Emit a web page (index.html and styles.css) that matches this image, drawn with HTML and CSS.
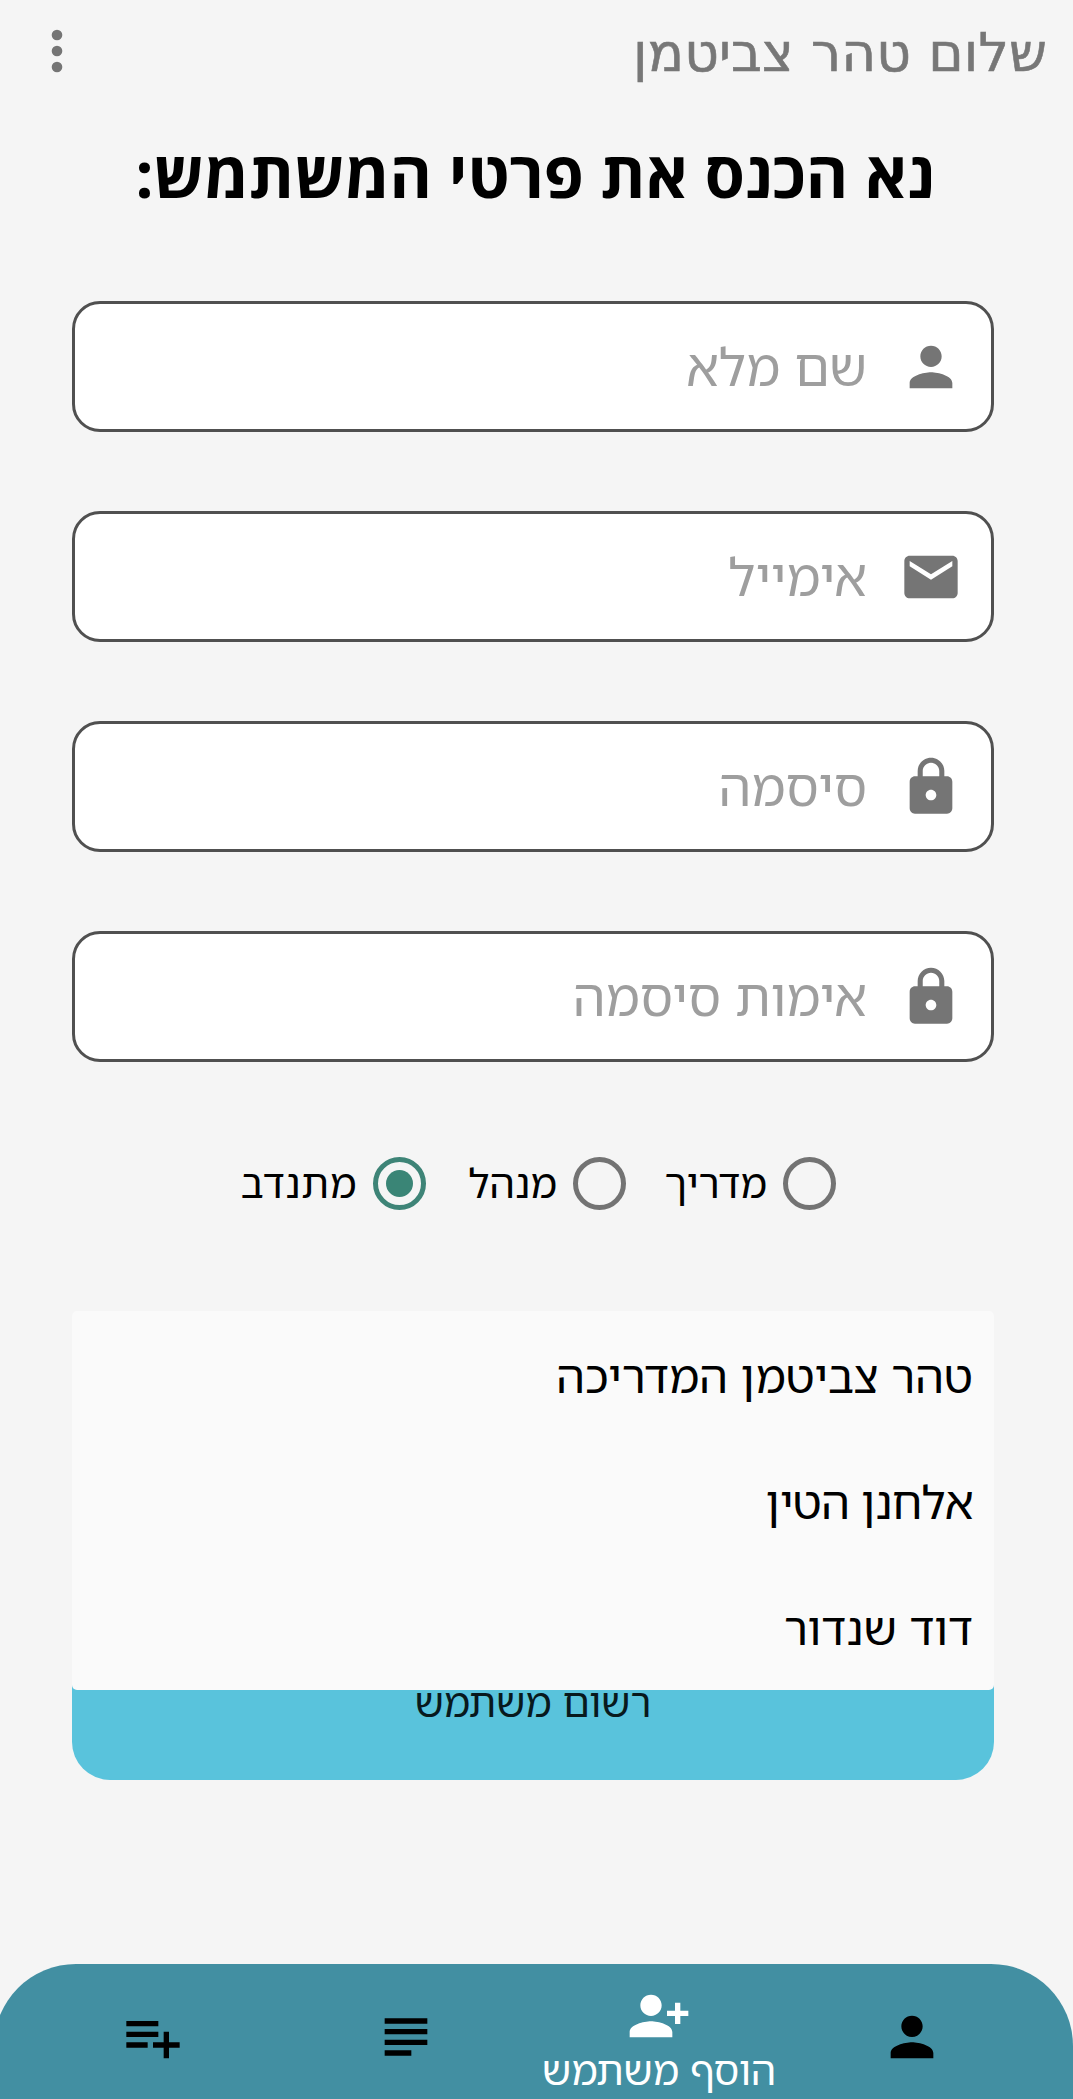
FILE: index.html
```html
<!DOCTYPE html>
<html lang="he" dir="rtl">
<head>
<meta charset="utf-8">
<title>הוסף משתמש</title>
<link rel="stylesheet" href="styles.css">
</head>
<body>
<svg class="defs" aria-hidden="true">
  <symbol id="person" viewBox="0 0 24 24"><path d="M12 12c2.21 0 4-1.79 4-4s-1.79-4-4-4-4 1.79-4 4 1.79 4 4 4zm0 2c-2.67 0-8 1.34-8 4v2h16v-2c0-2.66-5.33-4-8-4z"/></symbol>
  <symbol id="mail" viewBox="0 0 24 24"><path d="M20 4H4c-1.1 0-2 .9-2 2v12c0 1.100.9 2 2 2h16c1.100 0 2-.9 2-2V6c0-1.100-.9-2-2-2zm0 4l-8 5-8-5V6l8 5 8-5v2z"/></symbol>
  <symbol id="lock" viewBox="0 0 24 24"><path d="M18 8h-1V6c0-2.760-2.240-5-5-5S7 3.240 7 6v2H6c-1.100 0-2 .9-2 2v10c0 1.100.9 2 2 2h12c1.100 0 2-.9 2-2V10c0-1.100-.9-2-2-2zm-6 9c-1.100 0-2-.9-2-2s.9-2 2-2 2 .9 2 2-.9 2-2 2zm3.100-9H8.900V6c0-1.710 1.390-3.100 3.100-3.100s3.100 1.390 3.100 3.100v2z"/></symbol>
</svg>
<header class="topbar">
  <span class="greeting">שלום טהר צביטמן</span>
  <svg class="icon muted" viewBox="0 0 24 24"><circle cx="12" cy="6" r="2"/><circle cx="12" cy="12" r="2"/><circle cx="12" cy="18" r="2"/></svg>
</header>
<main class="form">
  <h1 class="heading">נא הכנס את פרטי המשתמש:</h1>
  <div class="fields">
    <div class="field"><svg class="icon muted"><use href="#person"/></svg><span>שם מלא</span></div>
    <div class="field"><svg class="icon muted"><use href="#mail"/></svg><span>אימייל</span></div>
    <div class="field"><svg class="icon muted"><use href="#lock"/></svg><span>סיסמה</span></div>
    <div class="field"><svg class="icon muted"><use href="#lock"/></svg><span>אימות סיסמה</span></div>
  </div>
  <div class="roles">
    <div class="role"><i class="radio"></i><span>מדריך</span></div>
    <div class="role"><i class="radio"></i><span>מנהל</span></div>
    <div class="role"><i class="radio checked"></i><span>מתנדב</span></div>
  </div>
  <div class="submit-area">
    <ul class="dropdown">
      <li>טהר צביטמן המדריכה</li>
      <li>אלחנן הטין</li>
      <li>דוד שנדור</li>
    </ul>
    <div class="submit">רשום משתמש</div>
  </div>
</main>
<nav class="nav">
  <div class="tab"><svg class="icon"><use href="#person"/></svg></div>
  <div class="tab active"><svg class="icon" viewBox="0 0 24 24"><path d="M9 12c2.210 0 4-1.790 4-4s-1.790-4-4-4-4 1.790-4 4 1.790 4 4 4zm9-2V7h2v3h3v2h-3v3h-2v-3h-3v-2h3zM9 14c-2.670 0-8 1.340-8 4v2h16v-2c0-2.660-5.330-4-8-4z"/></svg><span>הוסף משתמש</span></div>
  <div class="tab"><svg class="icon" viewBox="0 0 24 24"><path d="M14 17H4v2h10v-2zm6-8H4v2h16V9zM4 15h16v-2H4v2zM4 5v2h16V5H4z"/></svg></div>
  <div class="tab"><svg class="icon" viewBox="0 0 24 24"><path d="M14 10H2v2h12v-2zm0-4H2v2h12V6zm4 8v-4h-2v4h-4v2h4v4h2v-4h4v-2h-4zM2 16h8v-2H2v2z"/></svg></div>
</nav>
</body>
</html>
```
FILE: styles.css
```css
* { box-sizing: border-box; }

body {
  margin: 0;
  height: 2099px;
  display: flex;
  flex-direction: column;
  overflow: hidden;
  background: #f5f5f5;
  color: #000;
  font-family: "Noto Sans Hebrew", "Open Sans", sans-serif;
  white-space: nowrap;
}

.defs { display: none; }

.icon {
  width: 64px;
  height: 64px;
  flex: none;
  fill: currentColor;
}

.muted { color: #757575; }

.topbar {
  height: 101px;
  padding: 0 25px 0 24.500px;
  display: flex;
  align-items: center;
  justify-content: space-between;
}

.greeting {
  font: 53.5px/60px "DejaVu Sans", sans-serif;
  letter-spacing: 0.1px;
  -webkit-text-stroke: 0.6px #777;
  color: #777;
  padding: 5px 1px 0 0;
}

.form { padding: 0 79px 0 72px; }

.heading {
  margin: 28px 0 0;
  height: 172px;
  padding-left: 4px;
  text-align: center;
  font: 700 64.7px/89px "Open Sans", sans-serif;
}

.fields {
  display: grid;
  gap: 79px;
}

.field {
  height: 131px;
  padding-right: 28.500px;
  display: flex;
  align-items: center;
  gap: 31.500px;
  border: 3px solid #505050;
  border-radius: 28px;
  background: #fff;
  color: #9e9e9e;
  font-size: 51.8px;
  line-height: 70px;
}

.field span { padding-bottom: 2px; }

.roles {
  height: 249px;
  padding: 94px 158px 0 0;
  display: flex;
  align-items: flex-start;
  font-size: 40.5px;
  line-height: 54px;
}

.role {
  display: flex;
  gap: 16px;
  align-items: center;
}

.role:nth-child(1) { width: 210px; }
.role:nth-child(2) { width: 200px; }
.role:nth-child(3) { letter-spacing: 0.6px; }

.radio {
  width: 53px;
  height: 53px;
  flex: none;
  display: grid;
  place-items: center;
  border: 5px solid #737373;
  border-radius: 50%;
}

.radio.checked { border-color: #3e8477; }

.radio.checked::after {
  content: "";
  width: 27px;
  height: 27px;
  border-radius: 50%;
  background: #3a8576;
}

.submit-area {
  position: relative;
  height: 469px;
  padding-top: 315px;
}

.dropdown {
  position: absolute;
  inset: 0 0 auto 0;
  height: 379px;
  margin: 0;
  padding: 1px 0 0;
  list-style: none;
  border-radius: 5px;
  background: #fafafa;
  font-size: 45.9px;
  line-height: 126px;
}

.dropdown li { padding-right: 21px; }

.dropdown li:nth-child(2) { letter-spacing: -0.7px; }

.submit {
  height: 154px;
  border-radius: 38px;
  background: #59c3dc;
  color: #08191d;
  text-align: center;
  font-size: 39.9px;
  line-height: 151px;
}

.nav {
  height: 135px;
  margin: auto 0 0 -6px;
  padding: 0 34.500px 0 32.500px;
  display: grid;
  grid-template-columns: repeat(4, 1fr);
  border-radius: 82px 82px 0 0;
  background: #428fa2;
}

.tab {
  display: flex;
  flex-direction: column;
  align-items: center;
  padding-top: 41px;
}

.tab.active {
  padding-top: 20px;
  color: #fff;
  font-size: 40px;
  line-height: 44px;
}
```
